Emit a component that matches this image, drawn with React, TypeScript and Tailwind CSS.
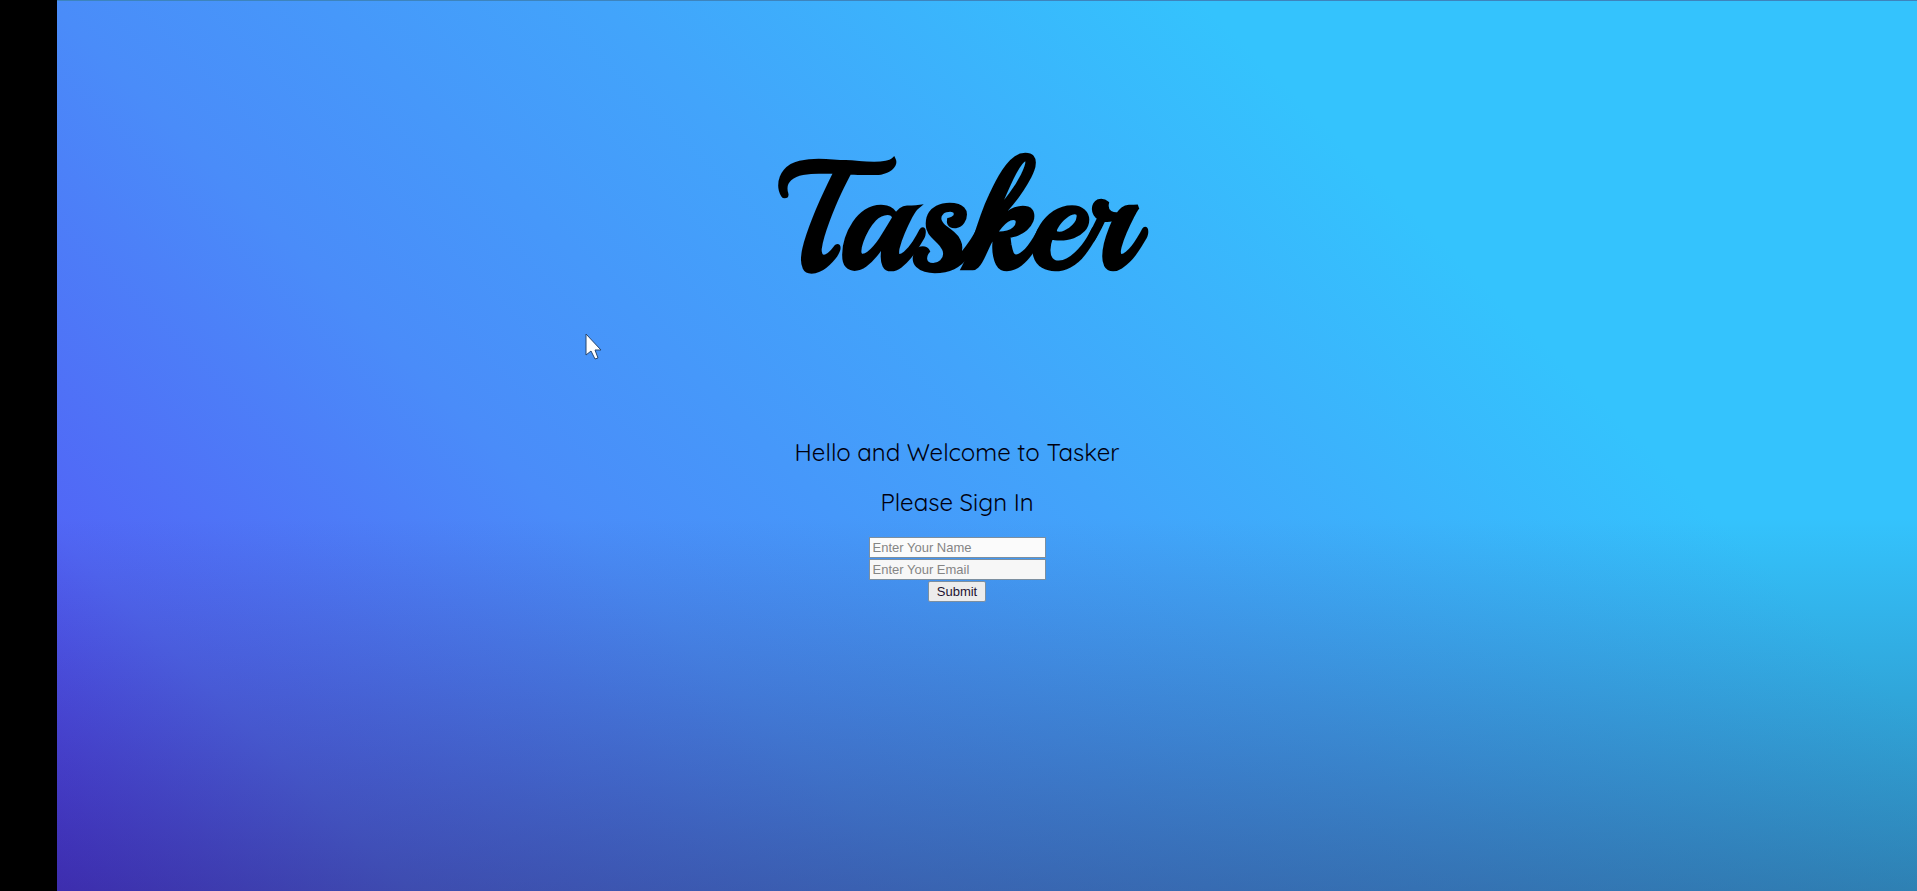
import React from "react";

export default function App() {
  return (
    <div className="flex min-h-screen bg-black font-['Liberation_Sans',Arial,sans-serif]">
      <main className="ml-[57px] flex flex-1 flex-col items-center border-t border-[#3d84bd] bg-[linear-gradient(to_bottom,rgba(30,34,60,0)_58%,rgba(30,34,60,0.38)_100%),linear-gradient(45deg,#5034f4_0%,#5166f6_13%,#4a8cf9_32%,#42a4fb_52%,#34c3fd_74%,#34c3fd_100%)] pr-[60px]">
        <h1 className="mt-[130px] font-[Playball,'Liberation_Serif',serif] text-[150px] leading-[176px] font-bold text-black">
          Tasker
        </h1>
        <section className="mt-[130px] flex flex-col items-center gap-5 font-[Quicksand,Lato,sans-serif] text-[24px] leading-[30px] text-[#00000f]">
          <p>Hello and Welcome to Tasker</p>
          <p>Please Sign In</p>
        </section>
        <form className="mt-5 flex flex-col items-center gap-px text-[13px] leading-[16px]" onSubmit={(e) => e.preventDefault()}>
          <input type="text" aria-label="Name" placeholder="Enter Your Name" className="h-[21px] w-[177px] border border-[#7c8fa0] bg-[#fbfbfb] px-[3px] placeholder:text-[#858585]" />
          <input type="email" aria-label="Email" placeholder="Enter Your Email" className="h-[21px] w-[177px] border border-[#7c8fa0] bg-[#f7f7f7] px-[3px] placeholder:text-[#858585]" />
          <button type="submit" className="h-[21px] rounded-[2px] border border-[#7c8fa0] bg-[#ececec] px-2 text-[#1c1230]">
            Submit
          </button>
        </form>
      </main>
      <svg aria-hidden="true" className="absolute top-[333px] left-[585px] h-7 w-[18px]" viewBox="0 0 18 28">
        <path d="M1 1v21l5-4 4 8 3-1-3-8h6z" fill="#fff" stroke="#27466f" strokeWidth="1" strokeLinejoin="round" />
      </svg>
    </div>
  );
}
